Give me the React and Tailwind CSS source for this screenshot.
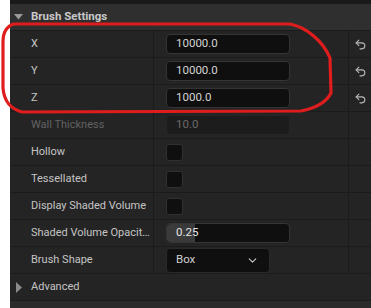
import { Undo2, ChevronDown } from 'lucide-react';

const font = { fontFamily: 'Roboto, "Noto Sans", sans-serif' };

function Row({ label, dim, children, reset }) {
    return (
        <div className="flex h-[27px] border-t border-[#1b1b1b] bg-[#242424]">
            <div className={`w-[144px] shrink-0 border-r border-[#1b1b1b] pl-[21px] flex items-center text-[11px] whitespace-nowrap overflow-hidden ${dim ? 'text-[#626262]' : 'text-[#c4c4c4]'}`}>
                <span>{label}</span>
            </div>
            <div className="w-[195px] shrink-0 border-r border-[#1b1b1b] pl-[12px] flex items-center">
                {children}
            </div>
            <div className="flex-1 flex items-center justify-center">
                {reset && <Undo2 size={13} strokeWidth={2} className="text-[#b8b8b8]" />}
            </div>
        </div>
    );
}

function NumInput({ value, dim }) {
    return (
        <div className={`w-[124px] h-[20px] rounded-[4px] border flex items-center pl-[9px] text-[11.5px] ${dim ? 'bg-[#1c1c1c] border-[#262626] text-[#6a6a6a]' : 'bg-[#0f0f0f] border-[#343434] text-[#d4d4d4]'}`}>
            {value}
        </div>
    );
}

function Check() {
    return <div className="w-[17px] h-[17px] rounded-[3px] bg-[#0f0f0f] border border-[#303030]" />;
}

export default function App() {
    return (
        <div className="w-[371px] h-[308px] bg-white flex relative overflow-hidden" style={font}>
            <div className="w-[10px] shrink-0" />
            <div className="flex-1 flex flex-col bg-[#1a1a1a]">
                <div className="h-[4px] shrink-0" />
                <div className="h-[26px] shrink-0 bg-[#2f2f2f] flex items-center">
                    <svg width="9" height="6" viewBox="0 0 9 6" className="ml-[4px] mr-[8px]">
                        <path d="M0 0 H9 L4.5 5.5 Z" fill="#9a9a9a" />
                    </svg>
                    <span className="text-[11.5px] font-bold text-[#c8c8c8]">Brush Settings</span>
                </div>
                <Row label="X" reset><NumInput value="10000.0" /></Row>
                <Row label="Y" reset><NumInput value="10000.0" /></Row>
                <Row label="Z" reset><NumInput value="1000.0" /></Row>
                <Row label="Wall Thickness" dim><NumInput value="10.0" dim /></Row>
                <Row label="Hollow"><Check /></Row>
                <Row label="Tessellated"><Check /></Row>
                <Row label="Display Shaded Volume"><Check /></Row>
                <Row label="Shaded Volume Opacit…">
                    <div className="w-[124px] h-[20px] rounded-[4px] border border-[#343434] bg-[#0f0f0f] relative overflow-hidden flex items-center">
                        <div className="absolute left-0 top-0 bottom-0 w-[28px] bg-[#3a3a3a] rounded-l-[3px]" />
                        <span className="relative pl-[9px] text-[11.5px] text-[#e4e4e4]">0.25</span>
                    </div>
                </Row>
                <Row label="Brush Shape">
                    <div className="w-[104px] h-[25px] rounded-[4px] border border-[#2a2a2a] bg-[#0f0f0f] flex items-center justify-between pl-[9px] pr-[10px] text-[11.5px] text-[#d0d0d0]">
                        <span>Box</span>
                        <ChevronDown size={13} strokeWidth={2} className="text-[#c8c8c8]" />
                    </div>
                </Row>
                <div className="h-[27px] shrink-0 border-t border-[#1b1b1b] bg-[#242424] flex items-center">
                    <svg width="6" height="11" viewBox="0 0 6 11" className="ml-[6px] mr-[9px]">
                        <path d="M0 0 L6 5.5 L0 11 Z" fill="#8a8a8a" />
                    </svg>
                    <span className="text-[11px] text-[#c4c4c4]">Advanced</span>
                </div>
                <div className="flex-1 border-t border-[#1b1b1b] bg-[#2b2b2b]" />
            </div>
            <svg className="absolute inset-0 pointer-events-none" width="371" height="308" viewBox="0 0 371 308">
                <path
                    d="M14 24 L290 24 C306 27 323 41 330 58 L331 93 C326 103 316 108 301 111 L22 112 C11 109 4 101 3 88 L3 42 C3 31 7 26 14 24 Z"
                    fill="none"
                    stroke="#e01d1d"
                    strokeWidth="3.2"
                    strokeLinejoin="round"
                />
            </svg>
        </div>
    );
}
